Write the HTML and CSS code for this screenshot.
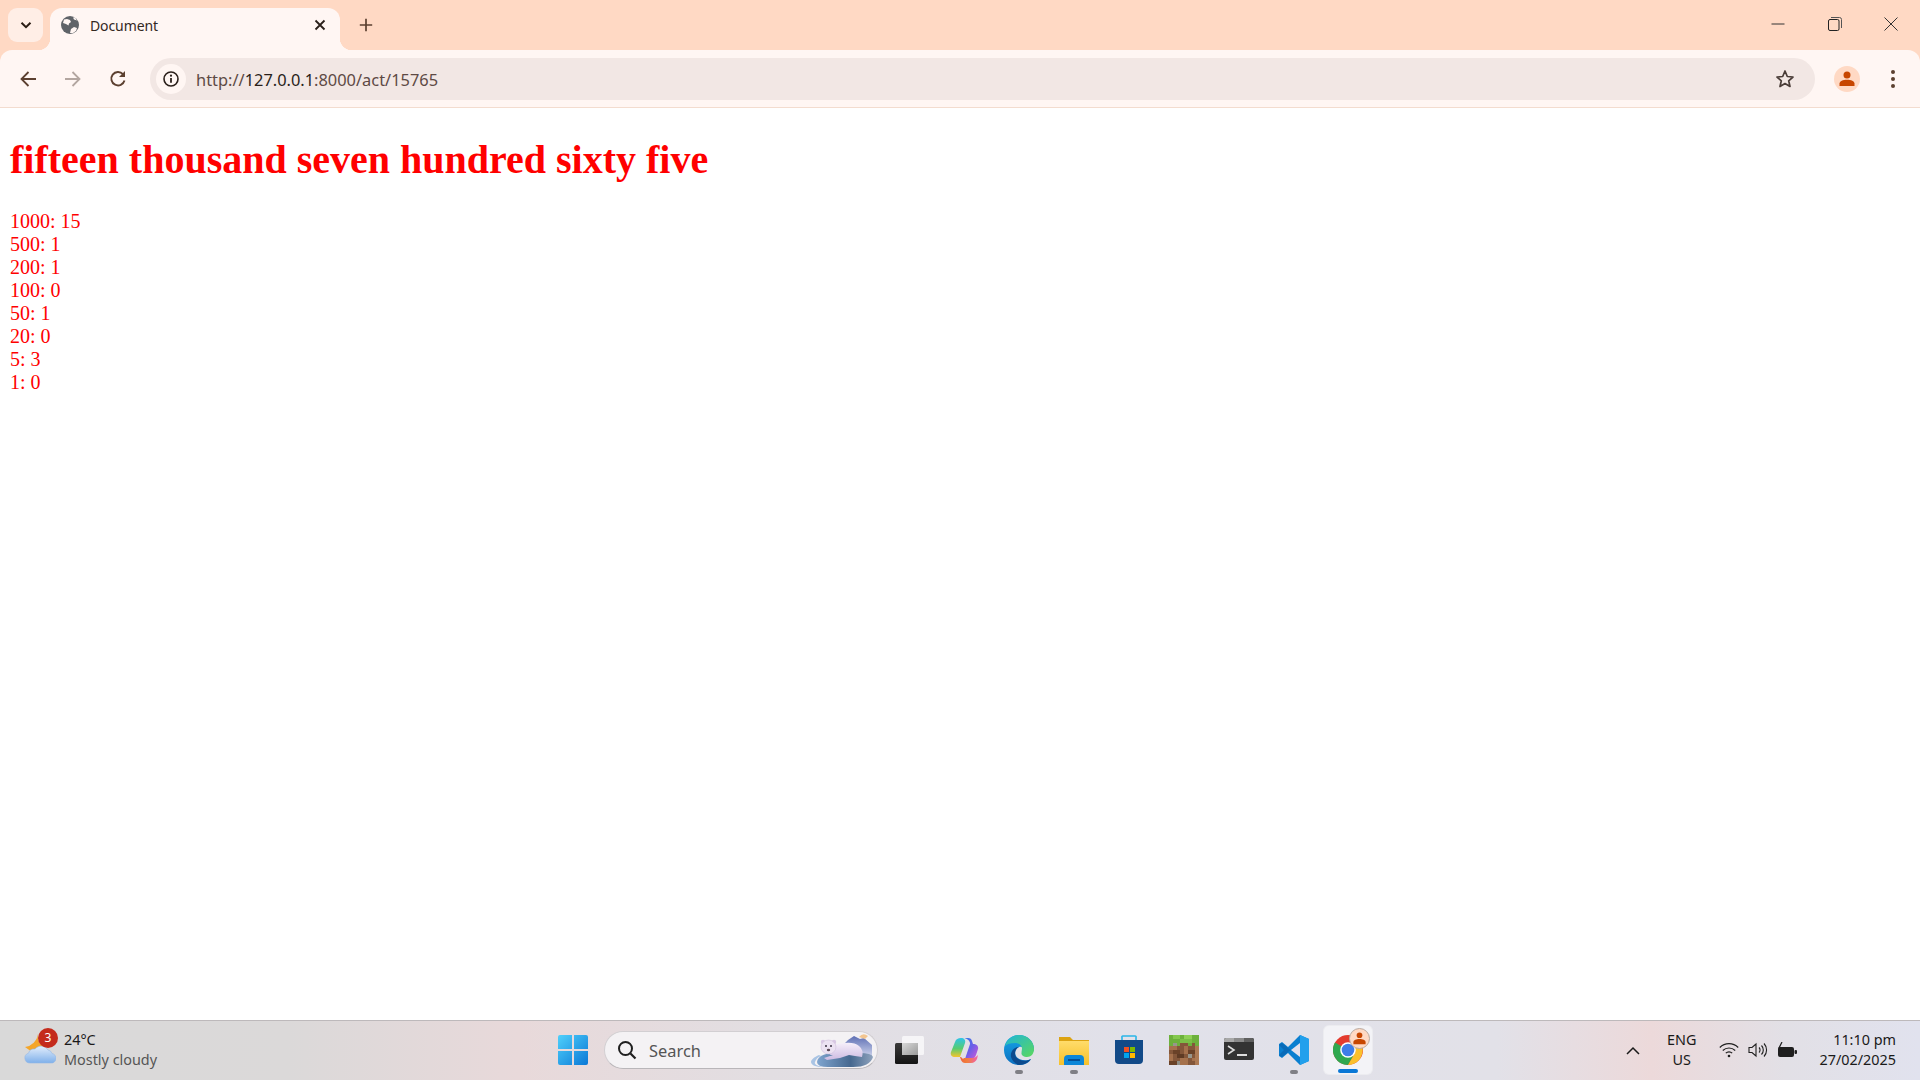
FILE: index.html
```html
<!DOCTYPE html>
<html lang="en">
<head>
<meta charset="utf-8">
<title>Document</title>
<link rel="stylesheet" href="styles.css">
</head>
<body>
<header class="chrome">
  <div class="tabstrip">
    <button class="tab-search"><svg width="14" height="14" viewBox="0 0 14 14"><path d="M2.500 4.800 7 9.200l4.500-4.400" fill="none" stroke="#2b1d14" stroke-width="2"/></svg></button>
    <div class="tab">
      <svg class="favicon" width="18" height="18" viewBox="0 0 18 18"><circle cx="9" cy="9" r="9" fill="#5f6368"/><path d="M3 3.500 6 3l3 1 1 2-2 1.500-.5 2L5 8 2 7zM9 17l1-4 3-2 3 1-1 3-3 2zM12 1.500l1 2 3 1-2-3z" fill="#fff6f3"/></svg>
      <span class="tab-title">Document</span>
      <svg class="tab-close" width="12" height="12" viewBox="0 0 12 12"><path d="M1.500 1.500l9 9m0-9-9 9" stroke="#2a1f1a" stroke-width="1.800"/></svg>
    </div>
    <svg class="new-tab" width="14" height="14" viewBox="0 0 14 14"><path d="M7 .8v12.400M.8 7h12.400" stroke="#5c4030" stroke-width="1.700"/></svg>
    <div class="window-controls">
      <svg width="14" height="14" viewBox="0 0 14 14"><path d="M.5 7h13" stroke="#333" stroke-width="1"/></svg>
      <svg width="14" height="14" viewBox="0 0 14 14"><rect x=".5" y="2.500" width="10.500" height="11" rx="1.500" fill="none" stroke="#222" stroke-width="1"/><path d="M3 .5h8.500A2 2 0 0 1 13.500 2.500V11" fill="none" stroke="#555" stroke-width="1"/></svg>
      <svg width="14" height="14" viewBox="0 0 14 14"><path d="M.5.5l13 13m0-13-13 13" stroke="#333" stroke-width="1"/></svg>
    </div>
  </div>
  <div class="toolbar">
    <button class="nav"><svg width="18" height="18" viewBox="0 0 18 18"><path d="M17 9H2.500M9.500 2 2.500 9l7 7" fill="none" stroke="#5c4030" stroke-width="1.800"/></svg></button>
    <button class="nav"><svg width="18" height="18" viewBox="0 0 18 18"><path d="M1 9h14.500M8.500 2l7 7-7 7" fill="none" stroke="#b3a6a0" stroke-width="1.800"/></svg></button>
    <button class="nav"><svg width="18" height="18" viewBox="0 0 18 18"><path d="M15.500 10.500A6.700 6.700 0 1 1 14 4.200" fill="none" stroke="#5c4030" stroke-width="1.900"/><path d="M16 1v6h-6z" fill="#5c4030"/></svg></button>
    <div class="omnibox">
      <span class="site-info"><svg width="16" height="16" viewBox="0 0 16 16"><circle cx="8" cy="8" r="7" fill="none" stroke="#2a1f1a" stroke-width="1.600"/><path d="M8 7v4.800" stroke="#2a1f1a" stroke-width="1.800"/><circle cx="8" cy="4.700" r="1.100" fill="#2a1f1a"/></svg></span>
      <span class="url">http://<b>127.0.0.1</b>:8000/act/15765</span>
      <svg class="star" width="20" height="20" viewBox="0 0 20 20"><path d="m10 2 2.300 5.500 5.700.5-4.300 3.800 1.300 5.700-5-3-5 3 1.300-5.700L2 8l5.700-.5z" fill="none" stroke="#4a3d38" stroke-width="1.700" stroke-linejoin="round"/></svg>
    </div>
    <span class="avatar"><svg width="16" height="16" viewBox="0 0 16 16"><circle cx="8" cy="4" r="3.500" fill="#c74600"/><path d="M.5 15v-2.500C.5 10 4 8.700 8 8.700s7.500 1.300 7.500 3.800V15z" fill="#c74600"/></svg></span>
    <span class="menu"><i></i><i></i><i></i></span>
  </div>
</header>
<main class="page">
  <h1>fifteen thousand seven hundred sixty five</h1>
  <p>1000: 15<br>500: 1<br>200: 1<br>100: 0<br>50: 1<br>20: 0<br>5: 3<br>1: 0</p>
</main>
<footer class="taskbar">
  <div class="weather">
    <span class="weather-icon">
      <svg width="32" height="32" viewBox="0 0 32 32"><defs><linearGradient id="cl" x1="0" y1="0" x2="0" y2="1"><stop offset="0" stop-color="#e3eefc"/><stop offset="1" stop-color="#7fb0ea"/></linearGradient></defs><path d="M14 0a11 11 0 0 0 1 8 10 10 0 0 0 8 5L8 18 1 13A15 15 0 0 0 14 0z" fill="#f4a62a"/><path d="M6 29a5 5 0 0 1-1.500-9.800A6 6 0 0 1 11 15a8 8 0 0 1 13 1 5 5 0 0 1 4 3.500A4.800 4.800 0 0 1 26.500 29z" fill="url(#cl)" stroke="#93b8e6" stroke-width=".6"/></svg>
      <span class="badge">3</span>
    </span>
    <span class="weather-text"><span class="temp">24°C</span><span class="sky">Mostly cloudy</span></span>
  </div>
  <div class="dock">
    <span class="slot start"><svg width="30" height="30" viewBox="0 0 30 30"><defs><linearGradient id="w" x1="0" y1="0" x2="1" y2="1"><stop offset="0" stop-color="#4fd0fb"/><stop offset="1" stop-color="#0a78d6"/></linearGradient></defs><path d="M2 0h12v14H0V2a2 2 0 0 1 2-2zM16 0h12a2 2 0 0 1 2 2v12H16zM0 16h14v14H2a2 2 0 0 1-2-2zM16 16h14v12a2 2 0 0 1-2 2H16z" fill="url(#w)"/></svg></span>
    <div class="search">
      <svg width="20" height="20" viewBox="0 0 20 20"><circle cx="8.500" cy="8.500" r="6.500" fill="none" stroke="#1f1f1f" stroke-width="2"/><path d="m13.500 13.500 5 5" stroke="#1f1f1f" stroke-width="2.200"/></svg>
      <span class="search-label">Search</span>
      <svg class="bear" width="64" height="36" viewBox="0 0 64 36"><defs><linearGradient id="sky" x1="0" y1="0" x2="0" y2="1"><stop offset="0" stop-color="#5e6fb4"/><stop offset="1" stop-color="#c9d0ea"/></linearGradient><linearGradient id="fur" x1="0" y1="0" x2="0" y2="1"><stop offset="0" stop-color="#f6effa"/><stop offset="1" stop-color="#cdbbe2"/></linearGradient><linearGradient id="disc" x1="0" y1="0" x2="1" y2="0"><stop offset="0" stop-color="#7fa5cf"/><stop offset=".6" stop-color="#46688f"/><stop offset="1" stop-color="#8fa3bd"/></linearGradient></defs><path d="M28 18 38 8l6-4 6 3 4-1 8 7v11H30z" fill="url(#sky)"/><path d="M49 5q4-5 9-1l-3 3z" fill="#f2c590"/><path d="M9 23C4 25 1 28 1 30c0 3 5 5 12 5-6-1-9-3-8-5 1-3 3-5 6-6z" fill="#a9c4e4"/><path d="M7 30q1-8 16-9h26q13 0 14 4-3 10-20 10H18q-11 0-11-5z" fill="url(#disc)"/><path d="M23 24q-5-2-6-5 3-7 10-7l8-1q9-1 14 3t3 11l-7-1-6-1-9 3-13 2-3-2 6-2z" fill="url(#fur)"/><circle cx="13" cy="10" r="2.200" fill="#d9c8e4"/><circle cx="24" cy="10" r="2.200" fill="#d9c8e4"/><ellipse cx="18.500" cy="15" rx="7.500" ry="7" fill="#ece2f2" stroke="#cbbbd8" stroke-width=".5"/><circle cx="16" cy="14" r="1" fill="#3a3140"/><circle cx="21" cy="14" r="1" fill="#3a3140"/><ellipse cx="18.500" cy="18" rx="1.700" ry="1.200" fill="#5d4b58"/></svg>
    </div>
    <span class="slot taskview"><svg width="30" height="30" viewBox="0 0 30 30"><defs><linearGradient id="tv" x1="0" y1="0" x2="1" y2="1"><stop offset="0" stop-color="#d8d8d8"/><stop offset="1" stop-color="#9a9a9a"/></linearGradient><linearGradient id="tv2" x1="0" y1="0" x2="0" y2="1"><stop offset="0" stop-color="#3a3a3a"/><stop offset="1" stop-color="#141414"/></linearGradient></defs><rect x="8" y="1" width="22" height="19" rx="1.500" fill="#f6f5f7"/><rect x="1" y="8" width="23" height="21" rx="1.500" fill="url(#tv2)"/><rect x="8" y="8" width="16" height="12" fill="url(#tv)"/></svg></span>
    <span class="slot"><svg width="30" height="30" viewBox="0 0 30 30"><defs><linearGradient id="cp1" x1="0" y1="0" x2="1" y2="1"><stop offset="0" stop-color="#2f7fe8"/><stop offset=".5" stop-color="#6a5ee8"/><stop offset="1" stop-color="#d45ad8"/></linearGradient><linearGradient id="cp2" x1="0" y1="0" x2="1" y2="0"><stop offset="0" stop-color="#f0503c"/><stop offset=".5" stop-color="#f0803c"/><stop offset="1" stop-color="#f060b0"/></linearGradient><linearGradient id="cp3" x1="0" y1="0" x2="0" y2="1"><stop offset="0" stop-color="#2fc4e8"/><stop offset=".55" stop-color="#56cc70"/><stop offset="1" stop-color="#f5c52d"/></linearGradient></defs><path d="M14 3h5a4 4 0 0 1 4 3l1 3h1a4 4 0 0 1 4 5l-2 6c-1 3-3 4-6 4h-5l5-15c.5-3-3-6-7-6z" fill="url(#cp1)"/><path d="M12 3c-3 0-5 1-6 4l-4 10c-1 3 1 5 4 5h5l5-14c1-3-1-5-4-5z" fill="url(#cp3)"/><path d="M7 22h4l1 3c1 2 2 3 4 3h6c3 0 5-2 6-4l1-4c-2 2-3 3-6 3h-8l-1 1-2-2z" fill="url(#cp2)"/></svg></span>
    <span class="slot pinned"><svg width="30" height="30" viewBox="0 0 30 30"><defs><linearGradient id="e1" x1="0" y1="0" x2="1" y2="1"><stop offset="0" stop-color="#1fb5d8"/><stop offset="1" stop-color="#5cd85c"/></linearGradient><linearGradient id="e2" x1="0" y1="0" x2="0" y2="1"><stop offset="0" stop-color="#15a6e8"/><stop offset="1" stop-color="#0d6fc0"/></linearGradient></defs><path d="M15 0C6 0 0 7 0 15c0 9 7 15 15 15 5 0 10-2 12-6-4 2-12 2-15-3-2-4 0-8 3-9 3-1 5 1 5 3h-1c0 2 3 4 5 4 3 0 6-2 6-5 0-8-7-14-15-14z" fill="url(#e2)"/><path d="M1 11C3 4 9 0 15 0c9 0 15 7 15 14 0 5-3 8-7 8-3 0-6-2-5.500-4 0-2 .5-3 .5-5-1-3-3-5-7-5C6 8 3 9 1 11z" fill="url(#e1)"/><path d="M15 12c-4 2-5 7-3 10 3 4 10 5 15 2-2 3-7 6-12 6-3-1-7-4-8-8-1-5 3-10 8-10z" fill="#0b4a8e"/></svg></span>
    <span class="slot pinned"><svg width="30" height="30" viewBox="0 0 30 30"><defs><linearGradient id="f" x1="0" y1="0" x2="0" y2="1"><stop offset="0" stop-color="#ffdc6b"/><stop offset="1" stop-color="#f6c02a"/></linearGradient></defs><path d="M0 2h11l3 3h16v8H0z" fill="#dca312"/><rect y="6" width="30" height="24" fill="url(#f)"/><path d="M5 30v-6a4 4 0 0 1 4-4h12a4 4 0 0 1 4 4v6z" fill="#0c86d8"/><rect x="9" y="24" width="12" height="2" fill="#044f96"/></svg></span>
    <span class="slot"><svg width="30" height="30" viewBox="0 0 30 30"><path d="M8 7V2.500A1 1 0 0 1 9 1h12a1 1 0 0 1 1 1.500V7" fill="none" stroke="#2ab5e8" stroke-width="1.600"/><path d="M1 5h28v20a4 4 0 0 1-4 4H5a4 4 0 0 1-4-4z" fill="#124a88"/><rect x="10" y="12" width="5" height="5" fill="#f25022"/><rect x="16" y="12" width="5" height="5" fill="#7fba00"/><rect x="10" y="18" width="5" height="5" fill="#00a4ef"/><rect x="16" y="18" width="5" height="5" fill="#ffb900"/></svg></span>
    <span class="slot"><svg width="30" height="30" viewBox="0 0 8 8" shape-rendering="crispEdges"><rect width="8" height="8" fill="#84573a"/><rect width="8" height="2" fill="#6db13c"/><rect x="1" width="2" height="1" fill="#84c84e"/><rect x="4" y="0" width="2" height="1" fill="#8fd056"/><rect x="3" y="1" width="3" height="1" fill="#7cc048"/><rect y="2" width="1" height="1" fill="#6db13c"/><rect x="2" y="2" width="1" height="1" fill="#6db13c"/><rect x="5" y="2" width="1" height="1" fill="#6db13c"/><rect x="7" y="2" width="1" height="1" fill="#6db13c"/><rect x="1" y="2" width="1" height="1" fill="#98968c"/><rect x="5" y="5" width="1" height="1" fill="#98968c"/><rect x="2" y="7" width="1" height="1" fill="#8f8d85"/><rect x="0" y="3" width="2" height="1" fill="#a5714c"/><rect x="4" y="3" width="1" height="2" fill="#a5714c"/><rect x="7" y="3" width="1" height="5" fill="#ad7a54"/><rect x="1" y="4" width="2" height="1" fill="#6a4228"/><rect x="5" y="4" width="2" height="1" fill="#6a4228"/><rect x="0" y="5" width="1" height="2" fill="#a5714c"/><rect x="2" y="5" width="2" height="1" fill="#5f3b24"/><rect x="3" y="6" width="2" height="2" fill="#a5714c"/><rect x="0" y="7" width="2" height="1" fill="#6a4228"/><rect x="6" y="6" width="1" height="1" fill="#a5714c"/></svg></span>
    <span class="slot"><svg width="30" height="24" viewBox="0 0 30 24"><rect width="30" height="22" rx="2" fill="#333"/><path d="M0 4V2a2 2 0 0 1 2-2h8v4z" fill="#a8a8a8"/><rect x="10" width="10" height="4" fill="#8a8a8a"/><path d="M20 0h8a2 2 0 0 1 2 2v2H20z" fill="#5f5f5f"/><path d="m4 8 6 4-6 4" fill="none" stroke="#ddd" stroke-width="1.600"/><rect x="13" y="16" width="10" height="2" fill="#ddd"/></svg></span>
    <span class="slot pinned"><svg width="30" height="30" viewBox="0 0 30 30"><path d="M21 0 30 4v22l-9 4-12-12-6 5-3-2v-12l3-2 6 5z" fill="#0a7fd0"/><path d="M21 0l9 4v22l-9 4z" fill="#22a0ec"/><path d="M21 8v14l-9-7z" fill="#e3e1ec"/><path d="M3 8 0 10l5 5-5 5 3 2 6-5 3-2-3-2z" fill="#0a6bb8"/></svg></span>
    <span class="slot active"><svg class="chrome-icon" width="30" height="30" viewBox="0 0 30 30"><circle cx="15" cy="15" r="15" fill="#e33b2e"/><path d="M15 15 2 7.500A15 15 0 0 0 15 30l7.500-13z" fill="#2fa84f"/><path d="M15 8h13a15 15 0 0 1-13 22l7.500-13z" fill="#fbc02d"/><circle cx="15" cy="15" r="7.800" fill="#fff"/><circle cx="15" cy="15" r="6.300" fill="#3d7de8"/></svg><span class="chrome-badge"><svg width="13" height="13" viewBox="0 0 16 16"><circle cx="8" cy="4" r="3.500" fill="#c74600"/><path d="M.5 15v-2.500C.5 10 4 8.700 8 8.700s7.500 1.300 7.500 3.800V15z" fill="#c74600"/></svg></span></span>
  </div>
  <div class="tray">
    <svg class="chevron" width="14" height="9" viewBox="0 0 14 9"><path d="m1 8 6-6 6 6" fill="none" stroke="#1a1a1a" stroke-width="1.500"/></svg>
    <span class="lang">ENG<br>US</span>
    <svg class="tray-icon" width="20" height="16" viewBox="0 0 20 16"><g fill="none" stroke="#1f1f1f" stroke-width="1.200"><path d="M.8 5.500a13 13 0 0 1 18.400 0"/><path d="M3.800 8.500a9 9 0 0 1 12.400 0"/><path d="M6.800 11.200a4.500 4.500 0 0 1 6.400 0"/></g><circle cx="10" cy="14" r="1.300" fill="#1f1f1f"/></svg>
    <svg class="tray-icon" width="20" height="16" viewBox="0 0 20 16"><path d="M1 5.500h3L8 2v12l-4-3.500H1z" fill="none" stroke="#1f1f1f" stroke-width="1.100"/><path d="M11 5.500a3.500 3.500 0 0 1 0 5M13.500 3.500a6.500 6.500 0 0 1 0 9M16 1.500a9.500 9.500 0 0 1 0 13" fill="none" stroke="#1f1f1f" stroke-width="1.100"/></svg>
    <svg class="tray-icon" width="21" height="17" viewBox="0 0 21 17"><path d="M4 5h11a2 2 0 0 1 2 2v6a2 2 0 0 1-2 2H3a2 2 0 0 1-2-2V7a2 2 0 0 1 2-2z" fill="#1f1f1f"/><rect x="17.500" y="8" width="2.500" height="4" rx="1" fill="#1f1f1f"/><path d="M5 0 2 6h3L3 10" fill="none" stroke="#1f1f1f" stroke-width="1.200"/></svg>
    <span class="clock"><span>11:10 pm</span><span>27/02/2025</span></span>
  </div>
</footer>
</body>
</html>
```
FILE: styles.css
```css
* { box-sizing: border-box; }
html, body { height: 100%; }
body {
  margin: 0;
  display: flex;
  flex-direction: column;
  height: 100vh;
  overflow: hidden;
  background: #fff;
  font-family: "Noto Sans", "Open Sans", sans-serif;
}
svg { display: block; flex: none; }
button { border: 0; background: none; padding: 0; display: flex; align-items: center; justify-content: center; }

.chrome { flex: none; background: #ffd9c4; }
.tabstrip { height: 50px; display: flex; align-items: flex-start; padding: 8px 0 0 8px; }
.tab-search { width: 35px; height: 34px; border-radius: 9px; background: #ffeee6; margin-right: 7px; }
.tab {
  position: relative;
  width: 290px;
  height: 42px;
  background: #fff6f3;
  border-radius: 12px 12px 0 0;
  display: flex;
  align-items: center;
  padding: 0 14px 8px 11px;
}
.tab::before, .tab::after {
  content: "";
  position: absolute;
  bottom: 0;
  width: 12px;
  height: 12px;
}
.tab::before { left: -12px; background: radial-gradient(circle at 0 0, transparent 12px, #fff6f3 12.5px); }
.tab::after { right: -12px; background: radial-gradient(circle at 100% 0, transparent 12px, #fff6f3 12.5px); }
.tab-title { margin-left: 11px; font-size: 14px; color: #33281f; flex: 1; letter-spacing: -.1px; }
.new-tab { margin: 10px 0 0 19px; }
.window-controls { margin-left: auto; margin-top: 9px; width: 127px; margin-right: 22px; display: flex; justify-content: space-between; }

.toolbar {
  height: 58px;
  background: #fff6f3;
  border-radius: 12px 12px 0 0;
  border-bottom: 1px solid #f3dccf;
  display: flex;
  align-items: center;
  padding: 1px 19px 0 5px;
  position: relative;
}
.nav { width: 45px; height: 36px; }
.omnibox {
  width: 1665px;
  height: 42px;
  margin-left: 10px;
  border-radius: 21px;
  background: #f2e7e4;
  display: flex;
  align-items: center;
  padding: 0 20px 0 6px;
}
.site-info { width: 30px; height: 30px; border-radius: 50%; background: #fff6f3; display: flex; align-items: center; justify-content: center; }
.url { margin-left: 10px; font-size: 16.400px; color: #5e4a44; flex: 1; }
.url b { font-weight: 400; color: #2a1f1a; }
.avatar { width: 26px; height: 26px; margin-left: 19px; border-radius: 50%; background: #ffd9c4; display: flex; align-items: center; justify-content: center; }
.menu { margin-left: 31px; display: flex; flex-direction: column; gap: 3px; }
.menu i { width: 4px; height: 4px; border-radius: 50%; background: #5c4030; }

.page { flex: 1; min-height: 0; padding: 29px 10px 0; color: #f00; font-family: "Liberation Serif", serif; font-size: 20px; line-height: 23px; }
.page h1 { margin: 0 0 27px; font-size: 40px; line-height: 46px; }
.page p { margin: 0; }

.taskbar {
  flex: none;
  height: 60px;
  border-top: 1px solid #bdb9bb;
  padding-bottom: 1px;
  display: flex;
  align-items: center;
  background: linear-gradient(90deg, #d9d9d9 0, #dbd9d9 15%, #e8d9da 27%, #e2dee2 40%, #e1e1ea 60%, #e2e1e8 78%, #ecd9da 86%, #e2e0e6 93%, #e1e2ee 100%);
  color: #1a1a1a;
  font-size: 14.400px;
}
.weather { width: 545px; display: flex; align-items: center; padding-left: 24px; }
.weather-icon { position: relative; width: 32px; height: 32px; display: block; }
.badge {
  position: absolute;
  top: -6px;
  left: 14px;
  width: 20px;
  height: 20px;
  border-radius: 50%;
  background: #c42b1c;
  color: #fff;
  font-size: 12px;
  line-height: 20px;
  text-align: center;
}
.weather-text { margin-left: 8px; padding-bottom: 1px; display: flex; flex-direction: column; line-height: 20px; }
.sky { color: #555; }

.dock { display: flex; align-items: center; }
.slot { position: relative; width: 55px; height: 48px; display: flex; align-items: center; justify-content: center; }
.start { margin-right: 4px; }
.search {
  width: 274px;
  height: 38px;
  margin-right: 3px;
  border-radius: 19px;
  background: #f4f2f4;
  border: 1px solid #d2cfd2;
  border-bottom-color: #b9b6b9;
  display: flex;
  align-items: center;
  padding: 0 3px 0 12px;
}
.search-label { margin-left: 12px; flex: 1; font-size: 16.400px; color: #555; }
.pinned::after, .active::after {
  content: "";
  position: absolute;
  left: 50%;
  bottom: 0;
  transform: translateX(-50%);
  width: 8px;
  height: 4px;
  border-radius: 2px;
  background: #7f7f85;
}
.active { width: 48px; margin-left: 3px; border-radius: 5px; background: #f3f3f7; box-shadow: 0 0 0 1px #ececf0; }
.active::after { width: 20px; background: #0a78d6; bottom: 1px; }
.chrome-icon { position: relative; }
.chrome-badge {
  position: absolute;
  top: 2px;
  right: 2px;
  width: 21px;
  height: 21px;
  border-radius: 50%;
  background: #ffd9c4;
  border: 1px solid #b9a99f;
  display: flex;
  align-items: center;
  justify-content: center;
}

.tray { margin-left: auto; display: flex; align-items: center; padding-right: 24px; }
.lang { margin-right: 23px; margin-left: 27px; padding-bottom: 1px; text-align: center; line-height: 20px; }
.tray-icon { margin-right: 9px; }
.clock { margin-left: 12px; padding-bottom: 1px; display: flex; flex-direction: column; align-items: flex-end; line-height: 20px; }
```
